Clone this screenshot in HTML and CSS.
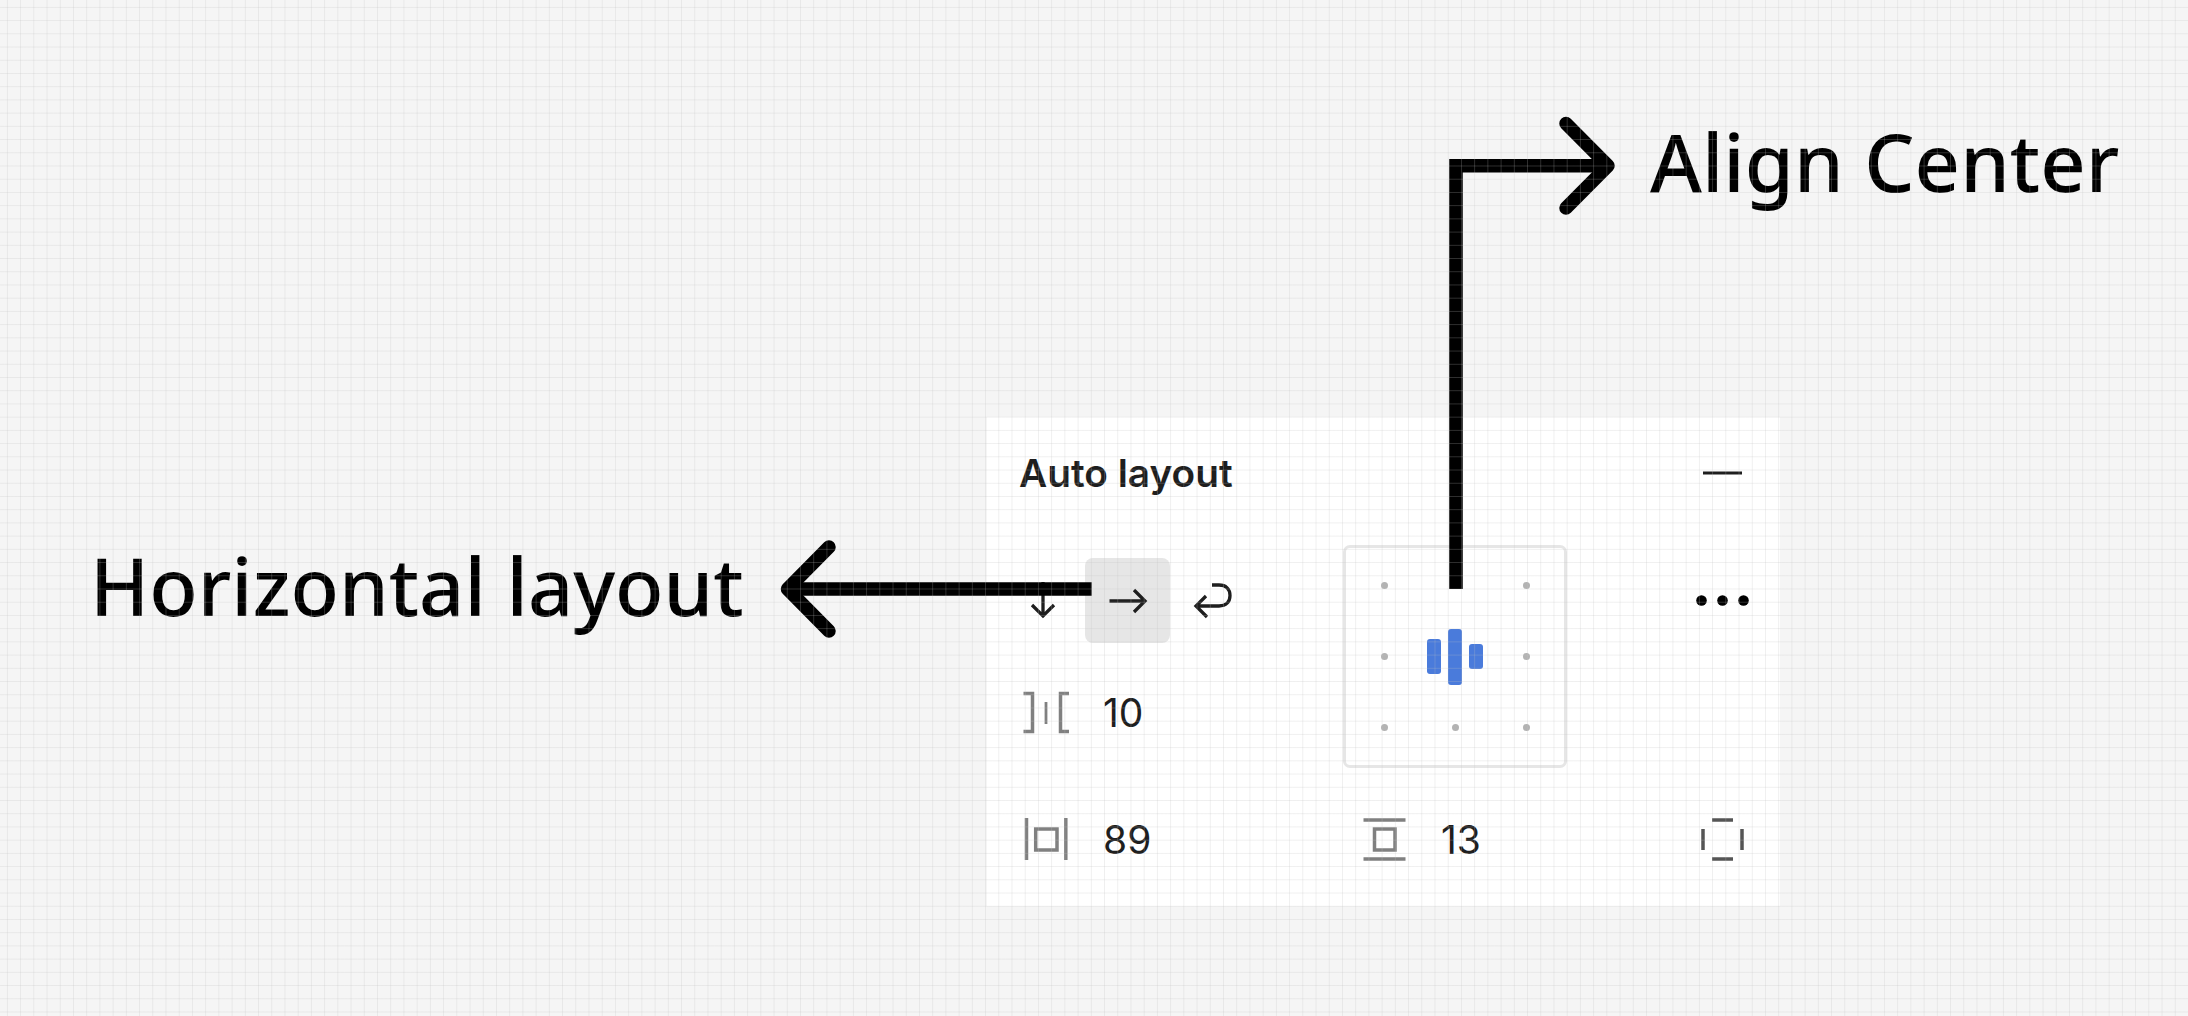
FILE: index.html
```html
<!DOCTYPE html>
<html lang="en">
<head>
    <meta charset="UTF-8">
    <title>Auto layout</title>
    <link rel="stylesheet" href="styles.css">
</head>
<body>
    <div class="panel">
        <div class="panel-header">
            <h2>Auto layout</h2>
            <svg class="icon" viewBox="0 0 48 48"><path d="M4 24H43" class="ink" stroke-width="3"/></svg>
        </div>
        <div class="panel-body">
            <div class="left-col">
                <div class="tools">
                    <button class="tool">
                        <svg class="icon" viewBox="0 0 48 48"><path d="M24 5V39M13 28L24 39L35 28" class="ink" stroke-width="3.300"/></svg>
                    </button>
                    <button class="tool active">
                        <svg class="icon" viewBox="0 0 48 48"><path d="M5.500 24H41M30 13L41 24L30 35" class="ink" stroke-width="3.300"/></svg>
                    </button>
                    <button class="tool">
                        <svg class="icon" viewBox="0 0 48 48"><path d="M23 8H30C37 8 41 12 41 18.500C41 25 37 29 30 29H7M17 19L7 29L18 40" class="ink" stroke-width="3.300"/></svg>
                    </button>
                </div>
                <div class="field gap-field">
                    <svg class="icon" viewBox="0 0 48 48"><path d="M1.500 5.500H10.500V43.500H1.500M47 5.500H38.500V43.500H47" class="soft" stroke-width="3.500"/><path d="M24 14V36" class="soft" stroke-width="2.800"/></svg>
                    <span>10</span>
                </div>
            </div>
            <div class="align-box">
                <i class="dot"></i><i class="dot"></i><i class="dot"></i>
                <i class="dot"></i>
                <div class="bars"><i class="bar-a"></i><i class="bar-b"></i><i class="bar-c"></i></div>
                <i class="dot"></i>
                <i class="dot"></i><i class="dot"></i><i class="dot"></i>
            </div>
            <div class="more more-top">
                <svg class="icon" viewBox="0 0 48 48"><circle cx="2.500" cy="24.500" r="5.300"/><circle cx="23.500" cy="24.500" r="5.300"/><circle cx="44.500" cy="24.500" r="5.300"/></svg>
            </div>
            <div class="field">
                <svg class="icon" viewBox="0 0 48 48"><path d="M4.500 3V45M43.800 3V45M13.700 14H35V35H13.700Z" class="soft" stroke-width="3.500"/></svg>
                <span>89</span>
            </div>
            <div class="field vertical-field">
                <svg class="icon" viewBox="0 0 48 48"><path d="M2.500 5H44.500M2.500 44H44.500M13.500 14H34V35H13.500Z" class="soft" stroke-width="3.500"/></svg>
                <span>13</span>
            </div>
            <div class="more more-bottom">
                <svg class="icon" viewBox="0 0 48 48"><path d="M13 5H34M13 44H34M4 14V35M43 14V35" class="dark" stroke-width="3.500"/></svg>
            </div>
        </div>
    </div>

    <span class="note note-left">Horizontal layout</span>
    <span class="note note-right">Align Center</span>

    <!-- pointers drawn on top of the panel -->
    <svg class="pointers" viewBox="0 0 2188 1016">
        <path d="M1091.700 589H787.500" class="pointer-line"/>
        <path d="M829 547L787.500 589L829 631" class="pointer-head"/>
        <path d="M1456 589V165.700H1608" class="pointer-line"/>
        <path d="M1566 123.500L1608 165.700L1566 208" class="pointer-head"/>
    </svg>

    <div class="grid-overlay"></div>
</body>
</html>
```

FILE: styles.css
```css
* {
    box-sizing: border-box;
}
html, body {
    margin: 0;
    height: 100%;
}
body {
    position: relative;
    overflow: hidden;
    background: #f5f5f5;
    color: #1e1e1e;
    font-family: 'Inter', sans-serif;
    padding: 417px 0 0 987px;
}
.panel {
    width: 793px;
    height: 489px;
    background: #ffffff;
    padding: 0 33px 0 32px;
}
.panel-header {
    height: 128px;
    padding-top: 36px;
    display: flex;
    justify-content: space-between;
    align-items: flex-start;
}
h2 {
    margin: 0;
    font-size: 38.800px;
    line-height: 40px;
    font-weight: 600;
}
.panel-header .icon {
    margin-top: -4px;
}
.icon {
    width: 48px;
    height: 48px;
    flex: none;
    display: block;
    overflow: visible;
}
.ink, .soft, .dark {
    fill: none;
}
.ink {
    stroke: #1e1e1e;
}
.soft {
    stroke: #808080;
}
.dark {
    stroke: #555555;
}
.panel-body {
    display: grid;
    grid-template-columns: 324px 224px 1fr;
    grid-template-rows: 223px 138px;
}
.left-col {
    padding-top: 13px;
}
.tools {
    display: flex;
    margin-left: -19px;
}
.tool {
    width: 85px;
    height: 85px;
    padding: 0;
    border: none;
    border-radius: 8px;
    background: none;
    display: flex;
    justify-content: center;
    align-items: center;
}
.tool.active {
    background: #e6e6e6;
}
.field {
    display: flex;
    align-items: center;
    gap: 33px;
    padding-left: 3px;
    font-size: 39px;
    height: 60px;
    align-self: start;
    margin-top: 41px;
}
.gap-field {
    margin-top: 39px;
}
.vertical-field {
    padding-left: 18px;
    gap: 32px;
}
.align-box {
    width: 224px;
    height: 223px;
    border: 3px solid #e6e6e6;
    border-radius: 7px;
    display: grid;
    grid-template-columns: repeat(3, 71px);
    grid-template-rows: repeat(3, 71px);
    justify-content: center;
    align-content: center;
    justify-items: center;
    align-items: center;
}
.dot {
    width: 7px;
    height: 7px;
    border-radius: 50%;
    background: #b3b3b3;
}
.bars {
    display: flex;
    align-items: center;
    gap: 7px;
}
.bars i {
    width: 14px;
    border-radius: 3px;
    background: #4a7bdb;
}
.bar-a {
    height: 35px;
}
.bar-b {
    height: 56px;
}
.bar-c {
    height: 25px;
}
.more {
    display: flex;
    justify-content: flex-end;
    align-items: flex-start;
}
.more-top {
    padding-top: 31px;
}
.more-bottom {
    padding-top: 47px;
}
.note {
    position: absolute;
    font-family: 'Noto Sans', sans-serif;
    font-size: 79.300px;
    font-weight: 500;
    line-height: 100px;
    color: #000000;
    white-space: nowrap;
}
.note-left {
    left: 90px;
    top: 535px;
}
.note-right {
    left: 1650px;
    top: 111px;
}
.pointers {
    position: absolute;
    inset: 0;
    width: 2188px;
    height: 1016px;
}
.pointer-line, .pointer-head {
    fill: none;
    stroke: #000000;
    stroke-width: 13.500;
}
.pointer-head {
    stroke-linecap: round;
    stroke-linejoin: round;
}
.pointer-line {
    stroke-linejoin: miter;
}
.grid-overlay {
    position: absolute;
    inset: 0;
    pointer-events: none;
    background-image:
        linear-gradient(to right, rgba(192, 192, 192, 0.25) 1.2px, transparent 1.2px),
        linear-gradient(to bottom, rgba(192, 192, 192, 0.25) 1.2px, transparent 1.2px);
    background-size: 13.230px 13.230px;
    background-position: 6.900px 6.900px;
}
```
